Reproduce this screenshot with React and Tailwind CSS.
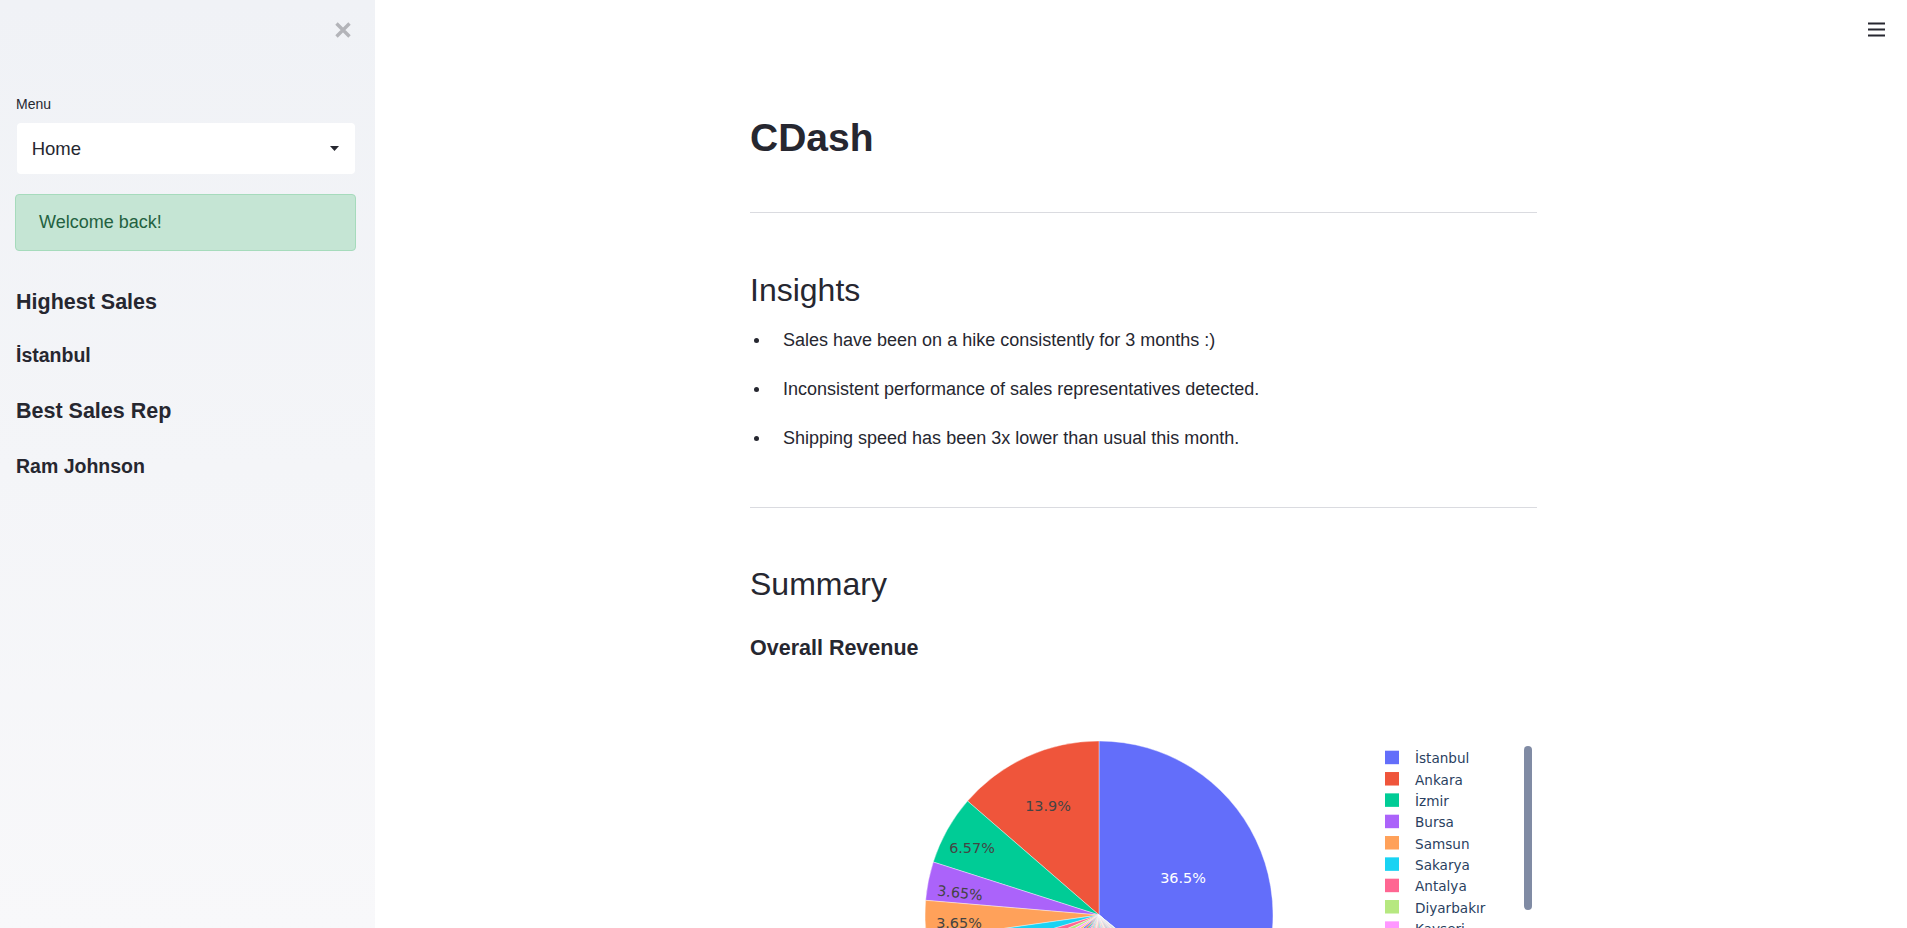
import React from 'react';

const PALETTE = ['#636efa', '#EF553B', '#00cc96', '#ab63fa', '#FFA15A', '#19d3f3', '#FF6692', '#B6E880', '#FF97FF', '#FECB52'];

const cities = [
  { name: 'İstanbul', pct: 36.5 },
  { name: 'Ankara', pct: 13.9 },
  { name: 'İzmir', pct: 6.57 },
  { name: 'Bursa', pct: 3.65 },
  { name: 'Samsun', pct: 3.65 },
  { name: 'Sakarya', pct: 2.4 },
  { name: 'Antalya', pct: 1.9 },
  { name: 'Diyarbakır', pct: 1.7 },
  { name: 'Kayseri', pct: 1.5 },
  { name: 'Konya', pct: 1.3 },
];

// the long tail of small provinces
const tail = Array.from({ length: 36 }, (_, i) => 1.45 - i * 0.037);

const CX = 349;
const CY = 252;
const R = 174;

function pt(a, r = R) {
  const rad = (a * Math.PI) / 180;
  return [CX + r * Math.sin(rad), CY - r * Math.cos(rad)];
}

function arc(a0, a1) {
  const [x0, y0] = pt(a0);
  const [x1, y1] = pt(a1);
  const large = a1 - a0 > 180 ? 1 : 0;
  return `M ${CX} ${CY} L ${x0} ${y0} A ${R} ${R} 0 ${large} 1 ${x1} ${y1} Z`;
}

function buildSlices() {
  const all = [...cities.map((c) => c.pct), ...tail];
  const total = all.reduce((s, v) => s + v, 0);
  const out = [];
  const first = (all[0] / total) * 360;
  out.push({ d: arc(0, first), color: PALETTE[0] });
  let cur = 0;
  for (let i = 1; i < all.length; i++) {
    const deg = (all[i] / total) * 360;
    out.push({ d: arc(cur - deg, cur), color: PALETTE[i % PALETTE.length] });
    cur -= deg;
  }
  return out;
}

function RevenuePie() {
  const slices = buildSlices();
  return (
    <svg width="787" height="450" className="block" style={{ fontFamily: '"DejaVu Sans", Verdana, sans-serif' }}>
      {slices.map((s, i) => (
        <path key={i} d={s.d} fill={s.color} stroke="#ffffff" strokeWidth="0.4" />
      ))}
      <text x="433" y="220" fontSize="14.4" fill="#ffffff" textAnchor="middle">36.5%</text>
      <text x="298" y="148" fontSize="14.4" fill="#444444" textAnchor="middle">13.9%</text>
      <text x="222" y="190" fontSize="14.4" fill="#444444" textAnchor="middle">6.57%</text>
      <text x="210" y="235" fontSize="14.4" fill="#444444" textAnchor="middle" transform="rotate(6 210 230)">3.65%</text>
      <text x="209" y="265" fontSize="14.4" fill="#444444" textAnchor="middle">3.65%</text>

      {cities.map((c, i) => (
        <g key={c.name}>
          <rect x="635" y={87.7 + i * 21.33} width="14" height="13.5" fill={PALETTE[i]} />
          <text x="665" y={100.3 + i * 21.33} fontSize="13.6" fill="#2a3f5f">{c.name}</text>
        </g>
      ))}
      <rect x="774" y="83" width="8" height="164" rx="4" fill="#808ba4" />
    </svg>
  );
}

function Sidebar() {
  return (
    <aside className="w-[375px] shrink-0 h-full bg-linear-to-b from-[#f0f2f6] to-[#f8f8fa] pl-[15px] pr-[19px] text-[#262730]">
      <div className="flex justify-end pt-[22px] pr-[5px]">
        <svg width="16" height="16" viewBox="0 0 16 16">
          <path d="M1.5 1.5 L14.5 14.5 M14.5 1.5 L1.5 14.5" stroke="#b3b4b9" strokeWidth="3.4" />
        </svg>
      </div>

      <div className="mt-[55.5px] ml-[1px] text-[14px] leading-[20px]">Menu</div>

      <div className="mt-[9.2px] ml-[2px] mr-[1px] h-[51px] bg-white rounded-[4px] flex items-center justify-between pl-[14.7px] pr-[16px] pt-[1px]">
        <span className="text-[18.5px]">Home</span>
        <svg width="9" height="5" viewBox="0 0 9 5">
          <path d="M0 0 L9 0 L4.5 5 Z" fill="#262730" />
        </svg>
      </div>

      <div className="mt-[20.3px] h-[56.7px] rounded-[4px] border border-[#a6dbbc] bg-[#c5e5d4] flex items-center pl-[23px] pt-[1px] text-[18px] text-[#23613f]">
        Welcome back!
      </div>

      <div className="pl-[1px]">
        <h2 className="mt-[36.2px] text-[21.5px] leading-[30px] font-bold">Highest Sales</h2>
        <p className="mt-[25px] text-[19.5px] leading-[26px] font-bold">İstanbul</p>
        <h2 className="mt-[28px] text-[21.5px] leading-[30px] font-bold">Best Sales Rep</h2>
        <p className="mt-[27px] text-[19.5px] leading-[26px] font-bold">Ram Johnson</p>
      </div>
    </aside>
  );
}

const insights = [
  'Sales have been on a hike consistently for 3 months :)',
  'Inconsistent performance of sales representatives detected.',
  'Shipping speed has been 3x lower than usual this month.',
];

export default function App() {
  return (
    <div className="flex h-screen w-full overflow-hidden bg-white text-[#262730]" style={{ fontFamily: '"Liberation Sans", Arial, sans-serif' }}>
      <Sidebar />

      <main className="relative flex-1 h-full">
        <button className="absolute top-[22px] right-[22px]">
          <svg width="17" height="15" viewBox="0 0 17 15">
            <path d="M0 1.5 H17 M0 7.5 H17 M0 13.5 H17" stroke="#262730" strokeWidth="2" />
          </svg>
        </button>

        <div className="ml-[375px] w-[787px] pt-[114px]">
          <h1 className="text-[39px] leading-[48px] font-bold">CDash</h1>

          <hr className="mt-[50px] border-0 border-t border-[#dadbe0]" />

          <h2 className="mt-[56.6px] text-[32px] leading-[40px] font-light">Insights</h2>
          <ul className="mt-[6.7px]">
            {insights.map((t) => (
              <li key={t} className="flex items-center h-[49px] text-[18px]">
                <span className="ml-[4px] w-[5px] h-[5px] rounded-full bg-[#262730] mb-[1px]" />
                <span className="ml-[24px]">{t}</span>
              </li>
            ))}
          </ul>

          <hr className="mt-[43.7px] border-0 border-t border-[#dadbe0]" />

          <h2 className="mt-[55.9px] text-[32px] leading-[40px] font-light">Summary</h2>
          <h3 className="mt-[29.35px] text-[21.5px] leading-[30px] font-bold">Overall Revenue</h3>

          <RevenuePie />
        </div>
      </main>
    </div>
  );
}
